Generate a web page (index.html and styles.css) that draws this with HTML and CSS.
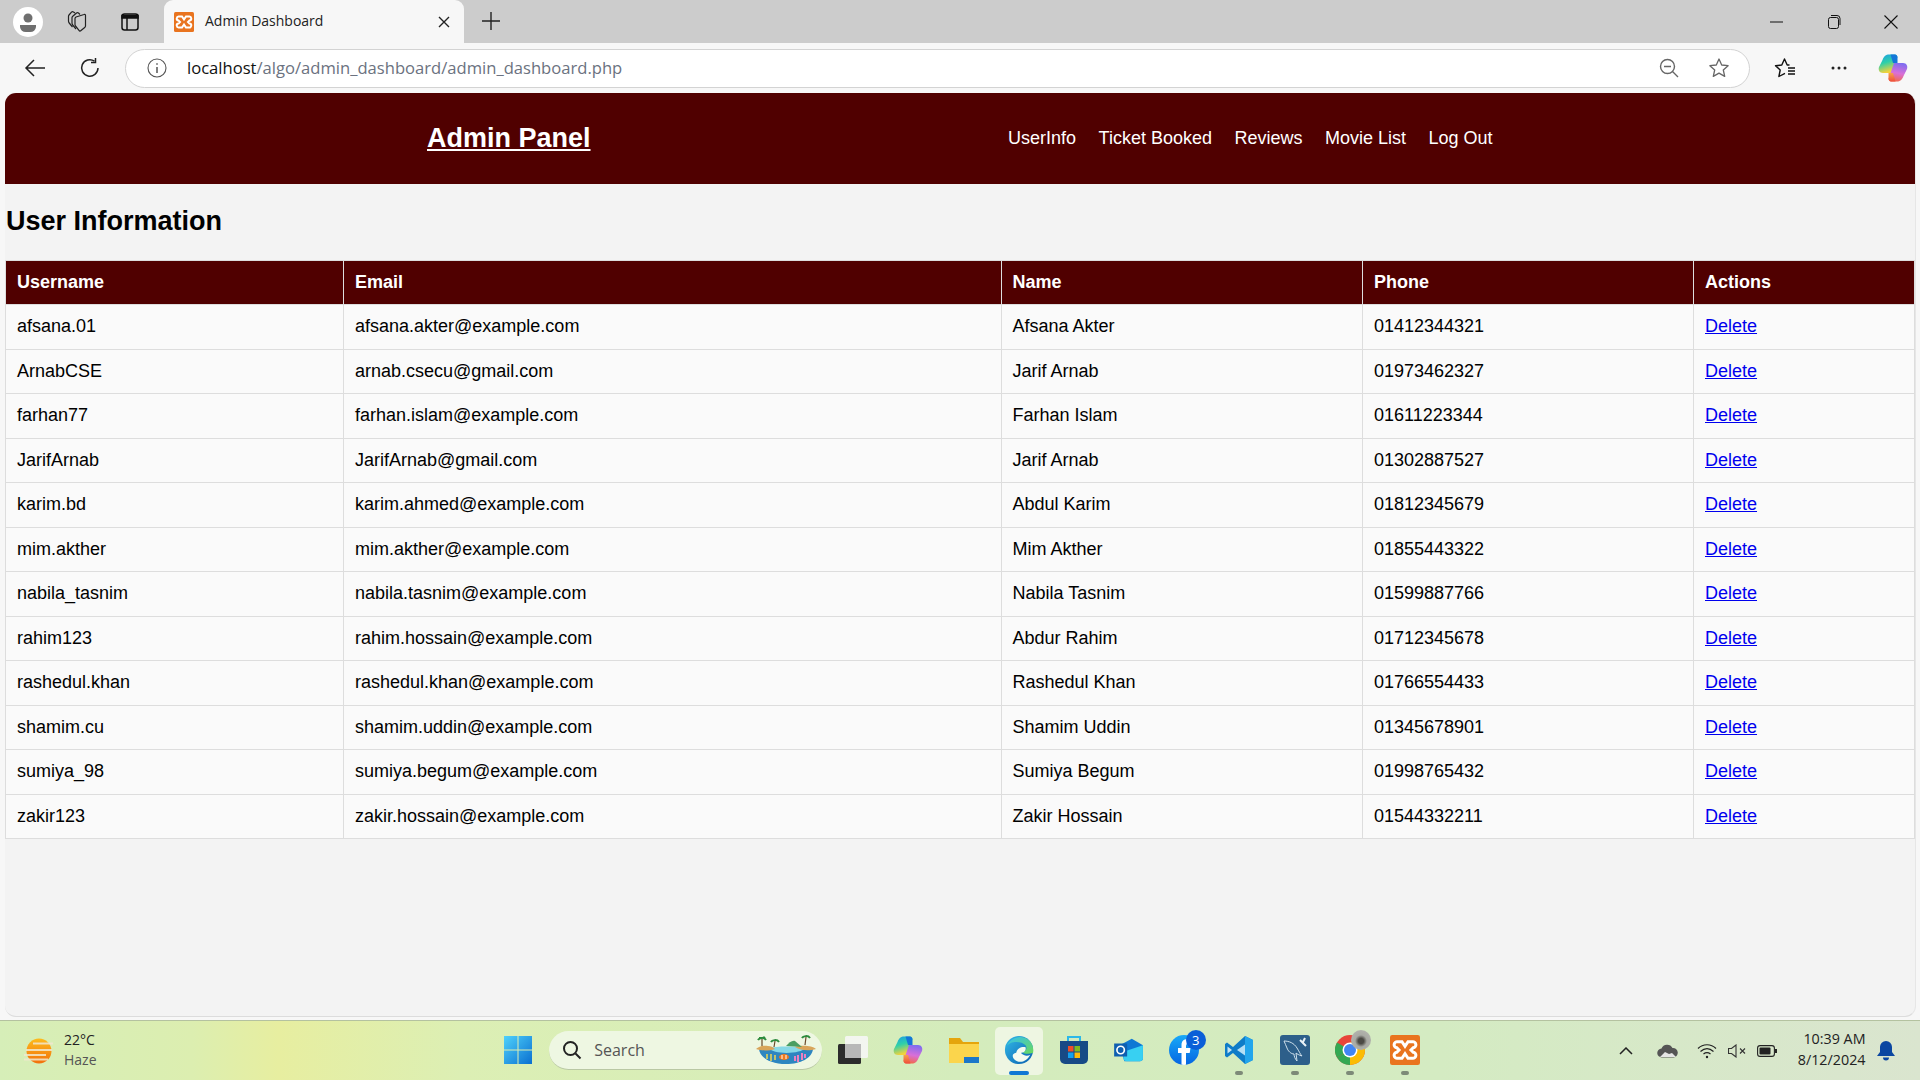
FILE: index.html
```html
<!DOCTYPE html>
<html lang="en">
<head>
<meta charset="utf-8">
<title>Admin Dashboard</title>
<link rel="stylesheet" href="styles.css">
</head>
<body>
<div class="tabstrip">
  <div class="tb-left">
    <span class="profile"><svg width="32" height="32" viewBox="0 0 32 32"><circle cx="16" cy="16" r="15" fill="#fff"/><circle cx="16" cy="12" r="4.500" fill="#6f6f6f"/><path d="M8 19h16v2a6 6 0 0 1-6 5h-4a6 6 0 0 1-6-5z" fill="#6f6f6f"/></svg></span>
    <span class="tb-btn coll"><svg width="24" height="24" viewBox="0 0 24 24" fill="none" stroke="#222" stroke-width="1.200" stroke-linejoin="round"><path d="M11 7l8-2.500a1 1 0 0 1 1.500 1V16a2 2 0 0 1-.8 1.500l-4 3.300a1 1 0 0 1-1.500-.2L10.500 16a2 2 0 0 1-.5-1.500V8.500A2 2 0 0 1 11 7z"/><path d="M15 4.500 13.500 3a1.500 1.500 0 0 0-2 0L7.500 6.500A2 2 0 0 0 7 8v5a3 3 0 0 0 .7 2l3.300 4"/><path d="M10 3 8.500 2A1.500 1.500 0 0 0 6.500 2.200L4 5a2 2 0 0 0-.5 1.500V11a3 3 0 0 0 .7 2l3.300 4"/></svg></span>
    <span class="tb-btn vt"><svg width="20" height="20" viewBox="0 0 20 20" fill="none" stroke="#111" stroke-width="1.500"><rect x="2" y="2" width="16" height="16" rx="2.500"/><path d="M2 3.500h16V6H2z" fill="#111"/><path d="M7 6v12"/></svg></span>
  </div>
  <div class="tab">
    <svg class="xampp" width="20" height="20" viewBox="0 0 40 40"><rect width="40" height="40" rx="3" fill="#e9741f"/><path d="M10 9h6l4 6 4-6h6a4 4 0 0 1 1 8l-3 3 3 3a4 4 0 0 1-1 8h-6l-4-6-4 6h-6a4 4 0 0 1-1-8l3-3-3-3a4 4 0 0 1 1-8z" fill="none" stroke="#fff" stroke-width="4"/></svg>
    <span class="tab-title">Admin Dashboard</span>
    <svg class="tab-x" width="12" height="12" viewBox="0 0 12 12" stroke="#222" stroke-width="1.400"><path d="M1 1l10 10M11 1 1 11"/></svg>
  </div>
  <span class="newtab"><svg width="18" height="18" viewBox="0 0 18 18" stroke="#222" stroke-width="1.400"><path d="M9 0v18M0 9h18"/></svg></span>
  <div class="winctl">
    <span class="wc"><svg width="13" height="2" viewBox="0 0 13 2"><path d="M0 1h13" stroke="#111" stroke-width="1"/></svg></span>
    <span class="wc"><svg width="14" height="16" viewBox="0 0 14 16" fill="none" stroke="#111"><rect x="1.500" y="3.500" width="10" height="11" rx="2"/><path d="M4 1.500h6a3 3 0 0 1 3 3V11"/></svg></span>
    <span class="wc"><svg width="14" height="14" viewBox="0 0 14 14" stroke="#111" stroke-width="1.100"><path d="M.5.5l13 13M13.500.5l-13 13"/></svg></span>
  </div>
</div>

<div class="toolbar">
  <span class="nav-btn back"><svg width="22" height="20" viewBox="0 0 22 20" fill="none" stroke="#222" stroke-width="1.500"><path d="M21 10H2M10 2l-8 8 8 8"/></svg></span>
  <span class="nav-btn reload"><svg width="22" height="22" viewBox="0 0 22 22" fill="none" stroke="#222" stroke-width="1.500"><path d="M15.500 4.200A8.200 8.200 0 1 0 19 11"/><path d="M16.500 1v4.500H12"/></svg></span>
  <div class="addr">
    <svg class="info" width="20" height="20" viewBox="0 0 20 20" fill="none" stroke="#555" stroke-width="1.100"><circle cx="10" cy="10" r="9"/><path d="M10 9v6M10 5.200v1.600" stroke-width="1.500"/></svg>
    <span class="url"><span class="host">localhost</span>/algo/admin_dashboard/admin_dashboard.php</span>
    <svg class="zoomout" width="20" height="20" viewBox="0 0 20 20" fill="none" stroke="#666" stroke-width="1.400"><circle cx="8.500" cy="8.500" r="7"/><path d="M5 8.500h7M13.500 13.500l5.500 5.500"/></svg>
    <svg class="star" width="22" height="22" viewBox="0 0 22 22" fill="none" stroke="#666" stroke-width="1.300" stroke-linejoin="round"><path d="M11 2l2.700 6 6.400.7-4.800 4.300 1.400 6.400L11 16.100l-5.700 3.300 1.400-6.400L1.900 8.700 8.300 8z"/></svg>
  </div>
  <span class="tool fav"><svg width="22" height="22" viewBox="0 0 22 22" fill="none" stroke="#111" stroke-width="1.400" stroke-linejoin="round"><path d="M15.500 8 13.200 8 10.500 2 7.800 8 1.500 8.700 6.200 13 4.900 19.500 11 16.300"/><path d="M14 11h7M14 14h7M14 17h7"/></svg></span>
  <span class="tool dots"><svg width="16" height="4" viewBox="0 0 16 4" fill="#222"><circle cx="2" cy="2" r="1.500"/><circle cx="8" cy="2" r="1.500"/><circle cx="14" cy="2" r="1.500"/></svg></span>
  <span class="tool cop"><svg width="30" height="30" viewBox="0 0 30 30"><defs><linearGradient id="cg1" x1="0" y1="0" x2=".3" y2="1"><stop offset="0" stop-color="#1b9de8"/><stop offset=".5" stop-color="#2fd0a8"/><stop offset="1" stop-color="#f4d23a"/></linearGradient><linearGradient id="cg2" x1=".6" y1="0" x2=".4" y2="1"><stop offset="0" stop-color="#7d6cf0"/><stop offset=".55" stop-color="#d96fd8"/><stop offset="1" stop-color="#f2684a"/></linearGradient><linearGradient id="cg3" x1="0" y1="0" x2="0" y2="1"><stop offset="0" stop-color="#f7a24a"/><stop offset="1" stop-color="#ee4d3c"/></linearGradient></defs><path d="M11 1.500h6c1.500 0 2 1 2.500 2.500L14 20H5C1.500 20 0 17 1 14l3.500-7C6 3 8 1.500 11 1.500z" fill="url(#cg1)"/><path d="M19 28.500h-6c-1.500 0-2-1-2.500-2.500L16 10h9c3.500 0 5 3 4 6l-3.500 7c-1.500 4-3.500 5.500-6.500 5.500z" fill="url(#cg2)"/><path d="M10.500 20h4.500L17.500 28.500H13c-1.500 0-2-1-2.500-2.500z" fill="url(#cg3)"/><path d="M19.500 10H15l-2.500-8.500H17c1.500 0 2 1 2.500 2.500z" fill="#1476d8"/></svg></span>
</div>

<div class="page">
  <header class="site-head">
    <a class="brand" href="#">Admin Panel</a>
    <nav class="site-nav">
      <a href="#">UserInfo</a>
      <a href="#">Ticket Booked</a>
      <a href="#">Reviews</a>
      <a href="#">Movie List</a>
      <a href="#">Log Out</a>
    </nav>
  </header>
  <h2 class="title">User Information</h2>
  <table class="users">
    <colgroup><col class="c1"><col class="c2"><col class="c3"><col class="c4"><col class="c5"></colgroup>
    <thead><tr><th>Username</th><th>Email</th><th>Name</th><th>Phone</th><th>Actions</th></tr></thead>
    <tbody>
      <tr><td>afsana.01</td><td>afsana.akter@example.com</td><td>Afsana Akter</td><td>01412344321</td><td><a href="#">Delete</a></td></tr>
      <tr><td>ArnabCSE</td><td>arnab.csecu@gmail.com</td><td>Jarif Arnab</td><td>01973462327</td><td><a href="#">Delete</a></td></tr>
      <tr><td>farhan77</td><td>farhan.islam@example.com</td><td>Farhan Islam</td><td>01611223344</td><td><a href="#">Delete</a></td></tr>
      <tr><td>JarifArnab</td><td>JarifArnab@gmail.com</td><td>Jarif Arnab</td><td>01302887527</td><td><a href="#">Delete</a></td></tr>
      <tr><td>karim.bd</td><td>karim.ahmed@example.com</td><td>Abdul Karim</td><td>01812345679</td><td><a href="#">Delete</a></td></tr>
      <tr><td>mim.akther</td><td>mim.akther@example.com</td><td>Mim Akther</td><td>01855443322</td><td><a href="#">Delete</a></td></tr>
      <tr><td>nabila_tasnim</td><td>nabila.tasnim@example.com</td><td>Nabila Tasnim</td><td>01599887766</td><td><a href="#">Delete</a></td></tr>
      <tr><td>rahim123</td><td>rahim.hossain@example.com</td><td>Abdur Rahim</td><td>01712345678</td><td><a href="#">Delete</a></td></tr>
      <tr><td>rashedul.khan</td><td>rashedul.khan@example.com</td><td>Rashedul Khan</td><td>01766554433</td><td><a href="#">Delete</a></td></tr>
      <tr><td>shamim.cu</td><td>shamim.uddin@example.com</td><td>Shamim Uddin</td><td>01345678901</td><td><a href="#">Delete</a></td></tr>
      <tr><td>sumiya_98</td><td>sumiya.begum@example.com</td><td>Sumiya Begum</td><td>01998765432</td><td><a href="#">Delete</a></td></tr>
      <tr><td>zakir123</td><td>zakir.hossain@example.com</td><td>Zakir Hossain</td><td>01544332211</td><td><a href="#">Delete</a></td></tr>
    </tbody>
  </table>
</div>

<div class="taskbar">
  <div class="weather">
    <svg width="30" height="30" viewBox="0 0 30 30"><defs><linearGradient id="sun" x1="0" y1="0" x2="0" y2="1"><stop offset="0" stop-color="#fdbb1c"/><stop offset="1" stop-color="#f2700c"/></linearGradient></defs><circle cx="15" cy="15" r="12.500" fill="url(#sun)"/><path d="M9 7.500h20M2 14h26M0 19h22M0 23.500h24" stroke="#f2e8cf" stroke-width="2.200" opacity=".85"/></svg>
    <div class="w-text"><span class="w-temp">22°C</span><span class="w-desc">Haze</span></div>
  </div>
  <div class="apps">
    <span class="app"><svg width="30" height="30" viewBox="0 0 30 30"><defs><linearGradient id="win" x1="0" y1="0" x2="1" y2="1"><stop offset="0" stop-color="#4fd2fb"/><stop offset="1" stop-color="#0a6fd0"/></linearGradient></defs><path fill="url(#win)" d="M1 1h13.500v13.500H1zM15.500 1H29v13.500H15.500zM1 15.500h13.500V29H1zM15.500 15.500H29V29H15.500z"/></svg></span>
    <div class="search">
      <svg width="20" height="20" viewBox="0 0 20 20" fill="none" stroke="#222" stroke-width="2"><circle cx="8.500" cy="8.500" r="6.500"/><path d="M13.500 13.500l5 5"/></svg>
      <span class="search-text">Search</span>
      <svg class="beach" width="62" height="30" viewBox="0 0 62 30"><path d="M4 14c8 1 46 1 54 0-1 9-12 15-27 15S5 23 4 14z" fill="#2e86c0"/><path d="M14 13c8-2 26-2 36 0-3 6-32 7-36 0z" fill="#86d8e6"/><path d="M1 14c3-3 8-4 12-3 3 0 5 1 7 3-6 2-14 2-19 0zM40 12c5-2 17-2 21 2-6 2-15 2-21-2z" fill="#d9a55b"/><path d="M31 11c3-3 6-6 9-5l7 6z" fill="#4a9e62"/><path d="M7 11 7 4M19 12 20 6M50 10 51 2" stroke="#6b4a2a" stroke-width="1.200"/><path d="M3 5c1-2 6-3 8 0M4 3c1 0 5 0 6-1M16 7c1-2 6-3 8 0M47 3c1-2 6-3 8 0" stroke="#2c8a3c" stroke-width="2" fill="none"/><ellipse cx="29" cy="22" rx="5" ry="3" fill="#f07a1c"/><path d="M27 20v4M31 20v4" stroke="#fff" stroke-width="1"/><path d="M43 27v-7M47 25v-7M40 26v-5M50 23v-4" stroke="#ee7fc0" stroke-width="2"/><path d="M12 24v-5M16 26v-7M20 25v-5" stroke="#e2d25a" stroke-width="1.600"/></svg>
    </div>
    <span class="app"><svg width="30" height="28" viewBox="0 0 30 28"><rect x="0" y="8" width="23" height="20" rx="1.500" fill="#2c2c2c"/><rect x="7" y="0" width="23" height="22" rx="1.500" fill="#f6f6f6" fill-opacity=".9"/><rect x="7" y="8" width="16" height="14" fill="#b8b8b8"/></svg></span>
    <span class="app"><svg width="30" height="30" viewBox="0 0 30 30"><path d="M11 1.500h6c1.500 0 2 1 2.500 2.500L14 20H5C1.500 20 0 17 1 14l3.500-7C6 3 8 1.500 11 1.500z" fill="url(#cg1)"/><path d="M19 28.500h-6c-1.500 0-2-1-2.500-2.500L16 10h9c3.500 0 5 3 4 6l-3.500 7c-1.500 4-3.500 5.500-6.500 5.500z" fill="url(#cg2)"/><path d="M10.500 20h4.500L17.500 28.500H13c-1.500 0-2-1-2.500-2.500z" fill="url(#cg3)"/><path d="M19.500 10H15l-2.500-8.500H17c1.500 0 2 1 2.500 2.500z" fill="#1476d8"/></svg></span>
    <span class="app"><svg width="30" height="27" viewBox="0 0 30 27"><path d="M0 2h11l3 4h16v21H0z" fill="#e5a50c"/><path d="M0 8h30v19H0z" fill="#fbd54c"/><path d="M15 21h15v6H15z" fill="#1b77c9"/></svg></span>
    <span class="app app-on"><svg width="30" height="30" viewBox="0 0 32 32"><defs><linearGradient id="e1" x1="0" y1="0" x2="1" y2="1"><stop offset="0" stop-color="#33bbe8"/><stop offset="1" stop-color="#0a5fb0"/></linearGradient><linearGradient id="e2" x1="0" y1="0" x2="1" y2="1"><stop offset="0" stop-color="#35c1f0"/><stop offset="1" stop-color="#6ad85a"/></linearGradient></defs><circle cx="16" cy="16" r="15" fill="url(#e1)"/><path d="M3 12C6 3 18-1 26 5c4 3 6 9 5 14-5 2-10 1-11-1 4-1 5-4 3-7-4-5-17-5-20 1z" fill="url(#e2)"/><path d="M13 19c1-5 6-7 10-6 1 4-2 6-5 6 2 3 7 4 10 2-3 6-9 9-14 7-5-2-7-8-1-9z" fill="#f4fbf0"/></svg><i class="active-bar"></i></span>
    <span class="app"><svg width="30" height="30" viewBox="0 0 30 30"><path d="M9 6V2h12v4" fill="none" stroke="#2cb8e8" stroke-width="2"/><path d="M1 6h28v18a5 5 0 0 1-5 5H6a5 5 0 0 1-5-5z" fill="#174a86"/><path fill="#ef4f27" d="M9 11h5.500v5.500H9z"/><path fill="#7fbb20" d="M15.500 11H21v5.500h-5.500z"/><path fill="#11a0ef" d="M9 17.500h5.500V23H9z"/><path fill="#fcba0a" d="M15.500 17.500H21V23h-5.500z"/></svg></span>
    <span class="app"><svg width="30" height="26" viewBox="0 0 32 28"><path d="M6 9l13-7 12 7v14a3 3 0 0 1-3 3H11z" fill="#0f78d4"/><path d="M10 16l21-7v14a3 3 0 0 1-3 3H13a3 3 0 0 1-3-3z" fill="#38d0f2"/><rect y="7" width="14" height="14" fill="#0f5fb0"/><circle cx="7" cy="14" r="4" fill="none" stroke="#fff" stroke-width="1.800"/></svg></span>
    <span class="app fb"><svg width="30" height="30" viewBox="0 0 30 30"><defs><linearGradient id="fbg" x1="0" y1="0" x2="0" y2="1"><stop offset="0" stop-color="#18aaf8"/><stop offset="1" stop-color="#0565e2"/></linearGradient><clipPath id="fbc"><circle cx="15" cy="15" r="15"/></clipPath></defs><circle cx="15" cy="15" r="15" fill="url(#fbg)"/><path clip-path="url(#fbc)" d="M12.500 30V18H9v-5h3.500v-3c0-4 2.500-6 6-6h3v4.500h-2c-1.700 0-2.500 1-2.500 2.500v2h4.500l-.8 5H17v12z" fill="#fff"/></svg><b class="badge">3</b></span>
    <span class="app app-run"><svg width="30" height="30" viewBox="0 0 30 30"><path d="M21 1l8 4v20l-8 4-12-11-6 4.500-2-1.500v-12l2-1.500 6 4.500z" fill="#0f7cc8"/><path d="M21 1l8 4v20l-8 4z" fill="#22a5ec"/><path d="M21 9.500 13 15l8 5.500z" fill="#b5dff5"/><path d="M3.500 11.500 8 15l-4.500 3.500z" fill="#c7e4f4"/></svg><i class="run-dot"></i></span>
    <span class="app app-run"><svg width="30" height="30" viewBox="0 0 30 30"><rect width="30" height="30" rx="3" fill="#2d5f8a"/><path d="M4 6c5 0 10 2 13 7 2 3 3 6 5 8-3-1-5-2-6-3l1 8c-2-2-3-5-3-7-3 0-6-3-7-6-1-2-2-5-3-7z" fill="none" stroke="#cfe0ec" stroke-width="1"/><path d="M20 5l6 6M25 3l-2 4" stroke="#e8f1f6" stroke-width="2"/></svg><i class="run-dot"></i></span>
    <span class="app app-run"><svg width="30" height="30" viewBox="0 0 30 30"><circle cx="15" cy="15" r="15" fill="#e8453a"/><path d="M15 15 2 22.500A15 15 0 0 0 15 30z" fill="#34a853"/><path d="M15 15v15A15 15 0 0 0 30 15c0-3-1-5-2-7.500H15z" fill="#fbbc04"/><path d="M15 15 2 22.500A15 15 0 0 1 2 7.500z" fill="#34a853"/><circle cx="15" cy="15" r="7.500" fill="#fff"/><circle cx="15" cy="15" r="6" fill="#4285f4"/></svg><i class="avatar"></i><i class="run-dot"></i></span>
    <span class="app app-run"><svg width="30" height="30" viewBox="0 0 40 40"><rect width="40" height="40" rx="3" fill="#e9741f"/><path d="M10 9h6l4 6 4-6h6a4 4 0 0 1 1 8l-3 3 3 3a4 4 0 0 1-1 8h-6l-4-6-4 6h-6a4 4 0 0 1-1-8l3-3-3-3a4 4 0 0 1 1-8z" fill="none" stroke="#fff" stroke-width="4"/></svg><i class="run-dot"></i></span>
  </div>
  <div class="tray">
    <svg class="t-chev" width="14" height="8" viewBox="0 0 14 8" fill="none" stroke="#222" stroke-width="1.500"><path d="M1 7l6-6 6 6"/></svg>
    <svg class="t-cloud" width="21" height="14" viewBox="0 0 21 14"><path d="M5 13.500a4.500 4.500 0 0 1-.5-9A6 6 0 0 1 15.500 4 4.500 4.500 0 0 1 16.500 13.500z" fill="#555"/><path d="M3 13l5-5 4 2 3-1 4 4z" fill="#e6e6e6"/></svg>
    <svg class="t-wifi" width="20" height="16" viewBox="0 0 20 16" fill="none" stroke="#222" stroke-width="1.200"><path d="M1 5.500c5-5 13-5 18 0M3.500 8.500c4-3.500 9-3.500 13 0M6.500 11c2-1.500 5-1.500 7 0"/><circle cx="10" cy="14" r="1.200" fill="#222" stroke="none"/></svg>
    <svg class="t-vol" width="19" height="14" viewBox="0 0 19 14" fill="none" stroke="#333" stroke-width="1.100"><path d="M.5 4.500h3L8 1v12L3.500 9.500h-3z"/><path d="M12 4.500l5 5M17 4.500l-5 5"/></svg>
    <svg class="t-bat" width="20" height="12" viewBox="0 0 20 12"><rect x=".6" y=".6" width="16.800" height="10.800" rx="2.500" fill="none" stroke="#222" stroke-width="1.100"/><rect x="2.500" y="2.500" width="11" height="7" rx="1" fill="#222"/><rect x="18" y="4" width="2" height="4" fill="#222"/></svg>
    <div class="clock"><span>10:39 AM</span><span>8/12/2024</span></div>
    <svg class="t-bell" width="18" height="20" viewBox="0 0 18 20" fill="#0b47a1"><path d="M9 0a6 6 0 0 1 6 6v5l3 4H0l3-4V6a6 6 0 0 1 6-6zM6 16.500h6a3 3 0 0 1-6 0z"/></svg>
  </div>
</div>
</body>
</html>
```

FILE: styles.css
```css
* { box-sizing: border-box; }
html, body { margin: 0; height: 100%; }
body {
  width: 1920px;
  height: 1080px;
  overflow: hidden;
  display: flex;
  flex-direction: column;
  background: #f7f7f7;
  font-family: "Liberation Sans", Arial, sans-serif;
}

/* browser tab strip */
.tabstrip {
  height: 43px;
  flex: none;
  display: flex;
  align-items: flex-start;
  background: #cccccc;
}
.tb-left { width: 164px; height: 43px; display: flex; align-items: center; padding-left: 12px; }
.profile { width: 32px; height: 32px; display: flex; }
.tb-btn { display: flex; }
.coll { margin-left: 21px; }
.vt { margin-left: 31px; }
.tab {
  width: 300px;
  height: 43px;
  background: #f7f7f7;
  border-radius: 9px 9px 0 0;
  display: flex;
  align-items: center;
  padding: 0 14px 0 10px;
}
.tab-title {
  margin: -2px 0 0 11px;
  flex: 1;
  font: 14px "Open Sans", "Noto Sans", sans-serif;
  color: #222;
}
.newtab { margin: 12px 0 0 18px; display: flex; }
.winctl { margin-left: auto; display: flex; height: 43px; align-items: center; padding-right: 1px; }
.wc { width: 57px; display: flex; justify-content: center; }

/* browser toolbar */
.toolbar {
  height: 50px;
  flex: none;
  display: flex;
  align-items: center;
  background: #f7f7f7;
}
.nav-btn { display: flex; }
.back { margin-left: 24px; }
.reload { margin-left: 33px; }
.addr {
  width: 1625px;
  height: 39px;
  margin-left: 24px;
  background: #fff;
  border: 1.500px solid #d3d3d3;
  border-radius: 20px;
  display: flex;
  align-items: center;
  padding: 0 19px 0 21px;
}
.url {
  margin: -2px 0 0 20px;
  flex: 1;
  font: 16.600px "Open Sans", "Noto Sans", sans-serif;
  color: #6b7280;
}
.host { color: #111; }
.star { margin-left: 29px; }
.tool { display: flex; }
.fav { margin-left: 24px; }
.dots { margin-left: 35px; }
.cop { margin-left: 31px; }

/* page */
.page {
  flex: none;
  height: 924px;
  margin: 0 4px 0 5px;
  background: #f3f3f3;
  border-radius: 11px;
  border-bottom: 1px solid #dcdcdc;
  border-right: 1px solid #e6e6e6;
  overflow: hidden;
}
.site-head {
  height: 91px;
  background: #500000;
  display: flex;
  align-items: center;
  padding-left: 422px;
}
.brand { color: #fff; font-size: 27px; font-weight: bold; text-decoration: underline; }
.site-nav { margin-left: 417.500px; display: flex; gap: 22.500px; }
.site-nav a { color: #fff; font-size: 18px; text-decoration: none; }
.title {
  margin: 0;
  height: 76px;
  padding-left: 1px;
  font-size: 27px;
  font-weight: bold;
  line-height: 75px;
  color: #000;
}
.users {
  width: 100%;
  table-layout: fixed;
  border-collapse: collapse;
  font-size: 18px;
  background: #fafafa;
}
.c1 { width: 338px; }
.c2 { width: 657.500px; }
.c3 { width: 361.500px; }
.c4 { width: 331px; }
.users th, .users td {
  border: 1px solid #dddddd;
  padding: 0 11px;
  text-align: left;
  height: 44.500px;
  color: #000;
}
.users th { height: 44px; background: #500000; color: #fff; font-weight: bold; }
.users a { color: #0000ee; }

/* taskbar */
.taskbar {
  margin-top: auto;
  height: 60px;
  flex: none;
  display: flex;
  align-items: center;
  border-top: 1px solid #b4c2a0;
  background: linear-gradient(90deg, #d6eeb8 0%, #dceeb0 10%, #e7eea0 14.500%, #dcefb4 24%, #d4ecbc 50%, #d4ebc2 75%, #dae5cf 100%);
}
.weather { width: 490px; display: flex; align-items: center; padding-left: 24px; gap: 10px; }
.w-text { display: flex; flex-direction: column; margin-top: -2px; font: 14px/20px "Open Sans", "Noto Sans", sans-serif; }
.w-temp { color: #222; }
.w-desc { color: #555; }
.apps { display: flex; align-items: center; height: 59px; }
.app {
  position: relative;
  width: 55.200px;
  height: 48px;
  display: flex;
  align-items: center;
  justify-content: center;
}
.app > svg { position: relative; top: -1px; }
.app-on::before {
  content: "";
  position: absolute;
  left: 3.600px; right: 3.600px; top: 0; bottom: 0;
  background: #eef6e2;
  border-radius: 5px;
}
.active-bar {
  position: absolute;
  left: 17.600px; bottom: 0;
  width: 20px; height: 4px;
  border-radius: 2px;
  background: #0f78d4;
}
.run-dot {
  position: absolute;
  left: 23.600px; bottom: 0;
  width: 8px; height: 4px;
  border-radius: 2px;
  background: #7d8a78;
}
.search {
  width: 273px;
  height: 39px;
  margin: 0 3.400px 0 4px;
  border-radius: 20px;
  border-bottom: 1px solid #b9c8a4;
  background: #eef7e2;
  display: flex;
  align-items: center;
  padding: 0 5px 0 13px;
}
.search-text { margin-left: 12px; flex: 1; font: 16px "Open Sans", "Noto Sans", sans-serif; color: #555; }
.badge {
  position: absolute;
  left: 29px; top: 3px;
  width: 20px; height: 20px;
  border-radius: 50%;
  background: #0a5fd8;
  color: #fff;
  font: 13px/20px "Open Sans", "Noto Sans", sans-serif;
  text-align: center;
}
.avatar {
  position: absolute;
  left: 29px; top: 3px;
  width: 20px; height: 20px;
  border-radius: 50%;
  background: radial-gradient(circle at 50% 55%, #4c4a45 0 18%, #a9aaa4 40%, #b9bab4 100%);
}
.tray { display: flex; align-items: center; margin-left: auto; padding-right: 25.500px; }
.t-cloud { margin-left: 24px; }
.t-wifi { margin-left: 19px; }
.t-vol { margin-left: 11px; }
.t-bat { margin-left: 10px; }
.clock {
  margin-left: 21px;
  margin-top: -2px;
  display: flex;
  flex-direction: column;
  align-items: flex-end;
  font: 14.300px/20.500px "Open Sans", "Noto Sans", sans-serif;
  color: #222;
}
.t-bell { margin-left: 11px; }
```
